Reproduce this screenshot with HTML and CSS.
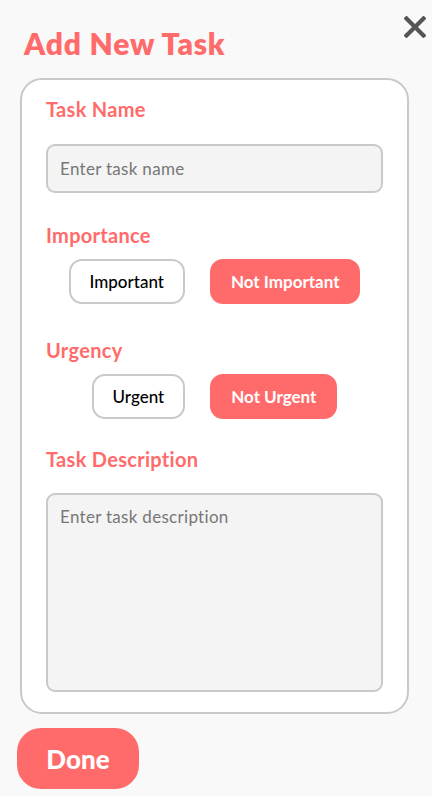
FILE: index.html
```html
<!DOCTYPE html>
<html lang="en">
<head>
<meta charset="utf-8">
<title>Add New Task</title>
<link rel="stylesheet" href="styles.css">
</head>
<body>
<div class="modal">
  <header class="header">
    <h1 class="title">Add New Task</h1>
    <button class="close" aria-label="Close">
      <svg width="22" height="22" viewBox="0 0 22 22"><path d="M2.5 2.5 L19.5 19.5 M19.5 2.5 L2.5 19.5" stroke="#555" stroke-width="4.2" stroke-linecap="square" fill="none"/></svg>
    </button>
  </header>
  <form class="card">
    <label class="label label-first">Task Name</label>
    <input class="field" type="text" placeholder="Enter task name">
    <div class="label label-imp">Importance</div>
    <div class="choices">
      <button type="button" class="choice">Important</button>
      <button type="button" class="choice active">Not Important</button>
    </div>
    <div class="label label-urg">Urgency</div>
    <div class="choices">
      <button type="button" class="choice">Urgent</button>
      <button type="button" class="choice active">Not Urgent</button>
    </div>
    <label class="label label-desc">Task Description</label>
    <textarea class="field area" placeholder="Enter task description"></textarea>
  </form>
  <button class="done">Done</button>
</div>
</body>
</html>
```
FILE: styles.css
```css
* { box-sizing: border-box; }
html, body { margin: 0; padding: 0; }
body {
  background: #f9f9f9;
  font-family: Lato, "Noto Sans", sans-serif;
  width: 432px;
  height: 796px;
  overflow: hidden;
}
.modal {
  display: flex;
  flex-direction: column;
  align-items: flex-start;
  padding: 16px 6px 0 20px;
}
.header {
  display: flex;
  justify-content: space-between;
  align-items: flex-start;
  width: 100%;
  padding-left: 4px;
}
.title {
  margin: 9px 0 0;
  font-size: 30px;
  line-height: 36px;
  font-weight: 800;
  letter-spacing: 0.8px;
  color: #ff6b6b;
}
.close {
  border: 0;
  background: none;
  padding: 0;
  width: 22px;
  height: 22px;
  display: block;
}
.close svg { display: block; }
.card {
  margin-top: 17px;
  width: 389px;
  background: #fff;
  border: 2px solid #c9c9cd;
  border-radius: 22px;
  padding: 17px 24px 20px 24px;
  display: flex;
  flex-direction: column;
}
.label {
  font-size: 20px;
  line-height: 24px;
  font-weight: 700;
  letter-spacing: 0.3px;
  color: #ff6b6b;
}
.label-imp { margin-top: 30px; }
.label-urg { margin-top: 34px; }
.label-desc { margin-top: 28px; }
.field {
  margin-top: 23px;
  width: 337px;
  height: 49px;
  background: #f4f4f4;
  border: 2px solid #c9c9cd;
  border-radius: 9px;
  padding: 0 12px;
  font-family: Lato, "Noto Sans", sans-serif;
  font-size: 17px;
  letter-spacing: 0.3px;
  color: #333;
  outline: none;
}
.field::placeholder { color: #777; }
.area {
  margin-top: 22px;
  height: 199px;
  padding: 11px 12px;
  resize: none;
  display: block;
}
.choices {
  margin-top: 12px;
  display: flex;
  justify-content: center;
  gap: 25px;
}
.choice {
  height: 45px;
  padding: 0 19px;
  border: 2px solid #c9c9cd;
  border-radius: 13px;
  background: #fff;
  color: #000;
  font-family: Lato, "Noto Sans", sans-serif;
  font-size: 17px;
  font-weight: 500;
}
.choice.active {
  background: #ff6b6b;
  border-color: #ff6b6b;
  color: #fff;
  font-weight: 700;
}
.done {
  margin: 14px 0 0 -3px;
  width: 122px;
  height: 61px;
  border: 0;
  border-radius: 24px;
  background: #ff6b6b;
  color: #fff;
  font-family: Lato, "Noto Sans", sans-serif;
  font-size: 26px;
  font-weight: 900;
}
```
